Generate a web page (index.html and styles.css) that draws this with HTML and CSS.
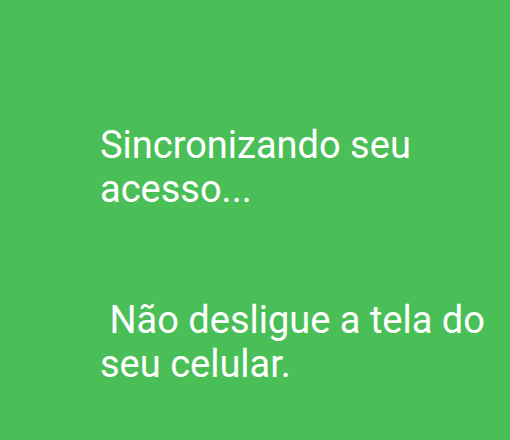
FILE: index.html
```html
<!DOCTYPE html>
<html lang="pt">
<head>
<meta charset="utf-8">
<link rel="stylesheet" href="styles.css">
</head>
<body>
<main class="screen">
  <p class="msg">Sincronizando seu acesso...</p>
  <p class="msg msg-second">&nbsp;Não desligue a tela do seu celular.</p>
</main>
</body>
</html>
```
FILE: styles.css
```css
html, body {
  margin: 0;
  padding: 0;
  background: #4bbf57;
}
.screen {
  width: 510px;
  height: 440px;
  box-sizing: border-box;
  padding: 123px 0 0 100px;
  font-family: Roboto, "Noto Sans", sans-serif;
  color: #ffffff;
}
.msg {
  margin: 0;
  font-size: 38px;
  line-height: 44px;
  width: 400px;
}
.msg-second {
  margin-top: 87px;
}
```
